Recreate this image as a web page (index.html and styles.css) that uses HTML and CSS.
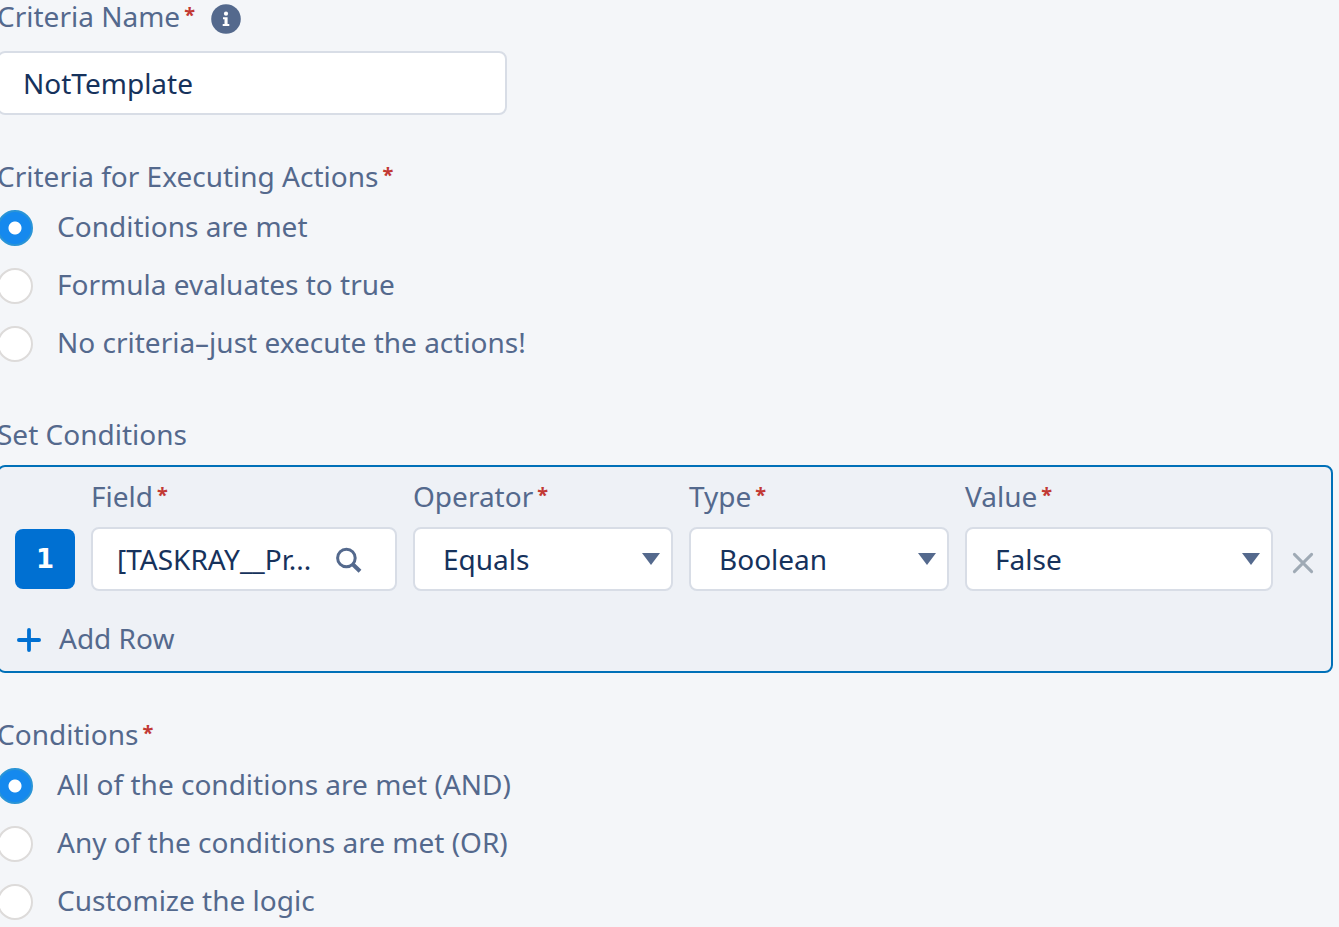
FILE: index.html
```html
<!DOCTYPE html>
<html lang="en">
<head>
<meta charset="utf-8">
<title>Define Criteria</title>
<link rel="stylesheet" href="styles.css">
</head>
<body>
<form class="criteria">
  <section class="group name-group">
    <div class="label-row">
      <label class="label" for="criteria-name">Criteria Name<span class="required">*</span></label>
      <button class="info" type="button" aria-label="Help">
        <svg viewBox="0 0 30 30" width="30" height="30"><circle cx="15" cy="15" r="14.8" fill="#54698d"/><circle cx="15" cy="9.7" r="2.1" fill="#fff"/><path d="M12 13.2h4.6v6.9h1.7v2h-6.6v-2h1.8v-4.9H12z" fill="#fff"/></svg>
      </button>
    </div>
    <input class="control name-input" id="criteria-name" type="text" value="NotTemplate">
  </section>

  <fieldset class="group choices">
    <legend class="label">Criteria for Executing Actions<span class="required">*</span></legend>
    <label class="choice"><input class="radio" type="radio" name="execute" checked><span>Conditions are met</span></label>
    <label class="choice"><input class="radio" type="radio" name="execute"><span>Formula evaluates to true</span></label>
    <label class="choice"><input class="radio" type="radio" name="execute"><span>No criteria–just execute the actions!</span></label>
  </fieldset>

  <section class="group conditions">
    <h2 class="label heading">Set Conditions</h2>
    <div class="panel">
      <div class="condition">
        <span class="number">1</span>
        <div class="cell">
          <label class="label" for="field">Field<span class="required">*</span></label>
          <div class="control lookup">
            <input class="lookup-input" id="field" type="text" value="[TASKRAY__Pr..." readonly>
            <button class="search" type="button" aria-label="Search">
              <svg viewBox="0 0 28 28" width="28" height="28" fill="none" stroke="#54698d"><circle cx="11.4" cy="11" r="8.8" stroke-width="3"/><path d="M18 17.5l7 6.8" stroke-width="4"/></svg>
            </button>
          </div>
        </div>
        <div class="cell">
          <label class="label" for="operator">Operator<span class="required">*</span></label>
          <div class="picker">
            <select class="control select" id="operator"><option>Equals</option></select>
            <svg class="arrow" viewBox="0 0 18 12" width="18" height="12"><path d="M0 0h18L9 12z" fill="#54698d"/></svg>
          </div>
        </div>
        <div class="cell">
          <label class="label" for="type">Type<span class="required">*</span></label>
          <div class="picker">
            <select class="control select" id="type"><option>Boolean</option></select>
            <svg class="arrow" viewBox="0 0 18 12" width="18" height="12"><path d="M0 0h18L9 12z" fill="#54698d"/></svg>
          </div>
        </div>
        <div class="cell">
          <label class="label" for="value">Value<span class="required">*</span></label>
          <div class="picker">
            <select class="control select" id="value"><option>False</option></select>
            <svg class="arrow" viewBox="0 0 18 12" width="18" height="12"><path d="M0 0h18L9 12z" fill="#54698d"/></svg>
          </div>
        </div>
        <button class="remove" type="button" aria-label="Remove row">
          <svg viewBox="0 0 28 28" width="28" height="28" stroke="#9faab5" stroke-width="3" stroke-linecap="round"><path d="M5.4 5.4l17.2 17.2M22.6 5.4L5.4 22.6"/></svg>
        </button>
      </div>
      <button class="add-row" type="button">
        <svg class="plus" viewBox="0 0 24 24" width="24" height="24" stroke="#0070d2" stroke-width="3.8" stroke-linecap="round"><path d="M12 1.9v20.2M1.9 12h20.2"/></svg>
        <span>Add Row</span>
      </button>
    </div>
  </section>

  <fieldset class="group choices">
    <legend class="label">Conditions<span class="required">*</span></legend>
    <label class="choice"><input class="radio" type="radio" name="logic" checked><span>All of the conditions are met (AND)</span></label>
    <label class="choice"><input class="radio" type="radio" name="logic"><span>Any of the conditions are met (OR)</span></label>
    <label class="choice"><input class="radio" type="radio" name="logic"><span>Customize the logic</span></label>
  </fieldset>
</form>
</body>
</html>
```
FILE: styles.css
```css
* { box-sizing: border-box; }

body {
  display: flow-root;
  margin: 0;
  background: #f4f6f9;
  color: #54698d;
  font: 28px/40px "Noto Sans", "Open Sans", sans-serif;
}

button, input, select { font: inherit; color: inherit; }

button {
  padding: 0;
  border: 0;
  background: none;
  cursor: pointer;
}

svg { display: block; }

.criteria {
  display: flex;
  flex-direction: column;
  margin: -4px 6px 0 -3px;
}

.group {
  min-width: 0;
  margin: 0;
  padding: 0;
  border: 0;
}

.name-group { margin-bottom: 41px; }

.label-row {
  display: flex;
  align-items: center;
  gap: 16px;
  margin-bottom: 15px;
}

.info { margin-top: 6px; }

.label {
  display: block;
  padding: 0;
  font-size: 28px;
  font-weight: 400;
  white-space: nowrap;
}

.required {
  margin-left: 4px;
  color: #c23934;
  font-size: 20px;
  font-weight: 700;
  line-height: 20px;
  vertical-align: 5px;
}

.control {
  display: block;
  width: 100%;
  height: 64px;
  border: 2px solid #d8dde6;
  border-radius: 8px;
  background: #fff;
  color: #16325c;
}

.name-input {
  max-width: 510px;
  padding: 0 24px;
}

.choices { margin-bottom: 52px; }
.choices:last-child { margin-bottom: 0; }
.choices .label { margin-bottom: 10px; }

.choice {
  display: flex;
  align-items: center;
  gap: 24px;
  height: 40px;
}

.choice + .choice { margin-top: 18px; }

.radio {
  appearance: none;
  flex: none;
  width: 36px;
  height: 36px;
  margin: 4px 0 0;
  border: 2px solid #dddbda;
  border-radius: 50%;
  background: #fff;
}

.radio:checked {
  border-color: #2a94d6;
  background: radial-gradient(circle, #fff 6px, #1589ee 7px);
}

.conditions { margin-bottom: 41px; }

.heading { margin: 0 0 11px; }

.panel {
  padding: 9px 14px 13px 16px;
  border: 2px solid #0070b8;
  border-radius: 8px;
  background: #eef1f6;
}

.condition {
  display: grid;
  grid-template-columns: 60px 306fr 260fr 260fr 308fr 28px;
  gap: 16px;
  align-items: end;
  margin-bottom: 27px;
}

.cell { min-width: 0; }
.cell .label { margin-bottom: 11px; }

.number {
  height: 60px;
  margin-bottom: 2px;
  border-radius: 8px;
  background: #0070d2;
  color: #fff;
  font: bold 26px/60px "DejaVu Sans", sans-serif;
  text-align: center;
}

.lookup {
  display: flex;
  align-items: center;
  gap: 8px;
  padding: 0 32px 0 24px;
}

.lookup-input {
  flex: 1;
  min-width: 0;
  padding: 0;
  border: 0;
  outline: 0;
  background: none;
}

.search { margin-top: 4px; }

.picker { position: relative; }

.select {
  appearance: none;
  padding: 0 40px 0 28px;
}

.arrow {
  position: absolute;
  top: 26px;
  right: 13px;
  pointer-events: none;
}

.remove { margin-bottom: 14px; }

.add-row {
  display: flex;
  align-items: center;
  gap: 18px;
  margin-left: 2px;
}

.plus { margin-top: 4px; }
```
